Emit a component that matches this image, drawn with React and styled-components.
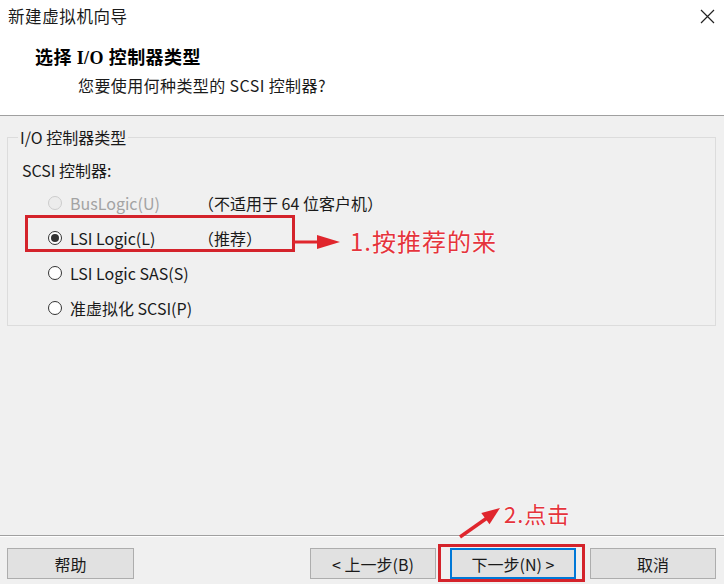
import React from "react";
import styled, { createGlobalStyle } from "styled-components";

const Global = createGlobalStyle`
  html, body { margin: 0; padding: 0; background: #f0f0f0; }
  body { font-family: "Noto Sans CJK SC", "Noto Sans", sans-serif; color: #000; }
  * { box-sizing: border-box; }
`;

const Window = styled.div`
  position: relative;
  width: 724px;
  height: 584px;
  display: flex;
  flex-direction: column;
  background: #f0f0f0;
  overflow: hidden;
`;

const TitleBar = styled.div`
  height: 32px;
  display: flex;
  align-items: center;
  justify-content: space-between;
  padding: 0 9px 0 8px;
  background: #fff;
`;

const TitleText = styled.div`
  font-size: 16.5px;
  letter-spacing: 0.6px;
  line-height: 20px;
  color: #1a1a1a;
`;

const CloseBtn = styled.div`
  width: 16px;
  height: 16px;
  display: flex;
  align-items: center;
  justify-content: center;
`;

const Header = styled.div`
  height: 84px;
  background: #fff;
  border-bottom: 1px solid #a0a0a0;
  display: flex;
  flex-direction: column;
  padding-left: 35px;
`;

const HeaderTitle = styled.div`
  margin-top: 14px;
  font-family: "Liberation Serif", "Noto Sans CJK SC", serif;
  font-weight: bold;
  font-size: 18px;
  letter-spacing: 0.4px;
  line-height: 24px;
`;

const HeaderSub = styled.div`
  margin-top: 4px;
  margin-left: 43px;
  font-size: 16px;
  letter-spacing: 0.4px;
  line-height: 22px;
  color: #1a1a1a;
`;

const Body = styled.div`
  flex: 1;
  display: flex;
  flex-direction: column;
  padding-top: 11px;
`;

const Group = styled.fieldset`
  margin: 0 8px 0 7px;
  padding: 8px 0 0 14px;
  min-width: 0;
  border: 1px solid #dcdcdc;
  border-radius: 0;
`;

const Legend = styled.legend`
  margin-left: -4px;
  padding: 0 2px;
  font-size: 16px;
  line-height: 20px;
  color: #1a1a1a;
`;

const FieldLabel = styled.div`
  height: 30px;
  display: flex;
  align-items: center;
  font-size: 16px;
  color: #1a1a1a;
`;

const RadioRow = styled.div`
  height: 35px;
  margin-left: 26px;
  display: grid;
  grid-template-columns: 150px 1fr;
  align-items: center;
  font-size: 16px;
  color: ${(p) => (p.$disabled ? "#a3a3a3" : "#1a1a1a")};
`;

const RadioLabel = styled.div`
  display: flex;
  align-items: center;
  gap: 8px;
`;

const RadioCircle = styled.span`
  width: 14px;
  height: 14px;
  border-radius: 50%;
  border: 1px solid ${(p) => (p.$disabled ? "#cccccc" : "#333")};
  background: ${(p) => (p.$disabled ? "#ececec" : "#fff")};
  display: flex;
  align-items: center;
  justify-content: center;
  &::after {
    content: "";
    width: 8px;
    height: 8px;
    border-radius: 50%;
    background: #333;
    display: ${(p) => (p.$checked ? "block" : "none")};
  }
`;

const Note = styled.span`
  color: #1a1a1a;
`;

const Footer = styled.div`
  height: 49px;
  border-top: 1px solid #a0a0a0;
  display: flex;
  justify-content: space-between;
  padding: 12px 8px 0 7px;
  box-shadow: inset 0 1px 0 #fff;
`;

const ButtonGroup = styled.div`
  display: flex;
  gap: 14px;
`;

const Button = styled.div`
  width: ${(p) => (p.$wide ? "127px" : "126px")};
  height: 31px;
  display: flex;
  align-items: center;
  justify-content: center;
  background: #e1e1e1;
  border: ${(p) => (p.$default ? "2px solid #0078d7" : "1px solid #adadad")};
  font-size: 16px;
  color: #1a1a1a;
`;

const RedBox = styled.div`
  position: absolute;
  border: 3px solid #d4232b;
`;

const Arrow = styled.svg`
  position: absolute;
  overflow: visible;
`;

const Annotation = styled.div`
  position: absolute;
  font-family: "Noto Sans CJK SC", sans-serif;
  color: #e5343c;
  letter-spacing: 1px;
  text-shadow: 0 0 2px #fff, 0 0 2px #fff;
  white-space: nowrap;
`;

const options = [
  { label: "BusLogic(U)", note: "（不适用于 64 位客户机）", disabled: true },
  { label: "LSI Logic(L)", note: "（推荐）", checked: true },
  { label: "LSI Logic SAS(S)" },
  { label: "准虚拟化 SCSI(P)" },
];

export default function App() {
  return (
    <>
      <Global />
      <Window>
        <TitleBar>
          <TitleText>新建虚拟机向导</TitleText>
          <CloseBtn>
            <svg width="15" height="15" viewBox="0 0 15 15">
              <path d="M1 1 L14 14 M14 1 L1 14" stroke="#222" strokeWidth="1.2" fill="none" />
            </svg>
          </CloseBtn>
        </TitleBar>
        <Header>
          <HeaderTitle>选择 I/O 控制器类型</HeaderTitle>
          <HeaderSub>您要使用何种类型的 SCSI 控制器?</HeaderSub>
        </Header>
        <Body>
          <Group>
            <Legend>I/O 控制器类型</Legend>
            <FieldLabel>SCSI 控制器:</FieldLabel>
            {options.map((o) => (
              <RadioRow key={o.label} $disabled={o.disabled}>
                <RadioLabel>
                  <RadioCircle $checked={o.checked} $disabled={o.disabled} />
                  <span>{o.label}</span>
                </RadioLabel>
                <Note>{o.note || ""}</Note>
              </RadioRow>
            ))}
          </Group>
        </Body>
        <Footer>
          <Button $wide>帮助</Button>
          <ButtonGroup>
            <Button>&lt; 上一步(B)</Button>
            <Button $default>下一步(N) &gt;</Button>
            <Button>取消</Button>
          </ButtonGroup>
        </Footer>

        <RedBox style={{ left: 25, top: 215, width: 270, height: 37 }} />
        <Arrow style={{ left: 293, top: 230 }} width="48" height="24" viewBox="0 0 48 24">
          <line x1="0" y1="12" x2="28" y2="12" stroke="#e0262d" strokeWidth="3" />
          <polygon points="24,5 47,12 24,19" fill="#e0262d" />
        </Arrow>
        <Annotation style={{ left: 350, top: 226, fontSize: 24, lineHeight: "30px" }}>1.按推荐的来</Annotation>

        <RedBox style={{ left: 438, top: 544, width: 147, height: 38 }} />
        <Arrow style={{ left: 455, top: 503 }} width="50" height="40" viewBox="0 0 50 40">
          <line x1="5" y1="34" x2="32" y2="15" stroke="#e0262d" strokeWidth="3.5" />
          <polygon points="45,5 34.5,21.3 26.3,9.9" fill="#e0262d" />
        </Arrow>
        <Annotation style={{ left: 504, top: 499, fontSize: 22, lineHeight: "28px" }}>2.点击</Annotation>
      </Window>
    </>
  );
}
